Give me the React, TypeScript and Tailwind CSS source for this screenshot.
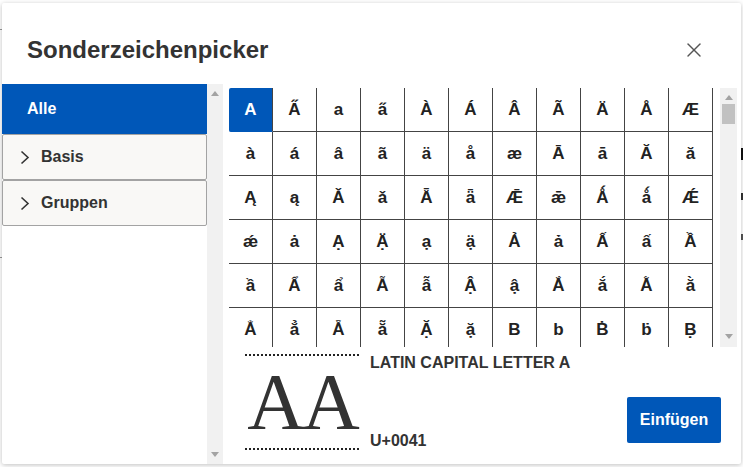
import React, { useState } from 'react';
import { X } from 'lucide-react';

const rows: string[][] = [
  ['A', 'A\u030B', 'a', 'a\u030B', 'À', 'Á', 'Â', 'Ã', 'Ä', 'Å', 'Æ'],
  ['à', 'á', 'â', 'ã', 'ä', 'å', 'æ', 'Ā', 'ā', 'Ă', 'ă'],
  ['Ą', 'ą', 'Ǎ', 'ǎ', 'Ǟ', 'ǟ', 'Ǣ', 'ǣ', 'Ǻ', 'ǻ', 'Ǽ'],
  ['ǽ', 'ȧ', 'Ạ', 'Ä\u0323', 'ạ', 'ä\u0323', 'Ả', 'ả', 'Ấ', 'ấ', 'Ầ'],
  ['ầ', 'Ẩ', 'ẩ', 'Ẫ', 'ẫ', 'Ậ', 'ậ', 'Ắ', 'ắ', 'Ằ', 'ằ'],
  ['Ẳ', 'ẳ', 'Ẵ', 'ẵ', 'Ặ', 'ặ', 'B', 'b', 'Ḃ', 'ḃ', 'Ḅ'],
];

const Arrow = ({ down = false }: { down?: boolean }) => (
  <svg width="8" height="5" viewBox="0 0 8 5" className="block">
    <polygon points={down ? '0,0 8,0 4,5' : '0,5 8,5 4,0'} fill="#a3a3a3" />
  </svg>
);

const Chevron = () => (
  <svg width="10" height="15" viewBox="0 0 10 15" className="block shrink-0">
    <polyline points="1.5,1.5 8,7.5 1.5,13.5" fill="none" stroke="#333" strokeWidth="1.6" />
  </svg>
);

export default function App() {
  const [selected] = useState('A');

  return (
    <div className="relative w-[743px] h-[467px] bg-white overflow-hidden font-['Liberation_Sans',Arial,sans-serif] text-[#333]">
      {/* page behind the dialog */}
      <div className="absolute left-0 top-[29px] w-[3px] h-px bg-[#999]" />
      <div className="absolute left-0 top-[257px] w-[3px] h-px bg-[#999]" />
      <div className="absolute right-0 top-[148px] w-[2px] h-[12px] bg-[#111]" />
      <div className="absolute right-0 top-[193px] w-[2px] h-[7px] bg-[#333]" />
      <div className="absolute right-0 top-[234px] w-[2px] h-[6px] bg-[#555]" />

      {/* dialog */}
      <div className="absolute left-[2px] top-[3px] w-[739px] h-[461px] bg-white rounded-[2px] shadow-[0_1px_5px_rgba(0,0,0,0.25)] flex flex-col">
        <div className="h-[81px] shrink-0 flex items-start justify-between pl-[25px] pr-[35px] pt-[33px]">
          <h2 className="text-[24px] leading-[28px] font-bold text-[#333]">Sonderzeichenpicker</h2>
          <button className="h-[28px] flex items-center text-[#555]" title="Schließen">
            <X size={24} strokeWidth={1.4} />
          </button>
        </div>

        <div className="flex flex-1 min-h-0">
          {/* sidebar */}
          <div className="w-[221px] shrink-0 flex">
            <div className="w-[205px] flex flex-col">
              <div className="h-[50px] bg-[#0057b8] text-white text-[16px] font-bold flex items-center pl-[25px]">
                Alle
              </div>
              <div className="h-[46px] bg-[#f9f8f6] border border-[#a3a3a3] rounded-[2px] flex items-center pl-[17px] gap-[11px] text-[16px] font-bold text-[#333]">
                <Chevron />
                Basis
              </div>
              <div className="h-[46px] bg-[#f9f8f6] border border-[#a3a3a3] rounded-[2px] flex items-center pl-[17px] gap-[11px] text-[16px] font-bold text-[#333]">
                <Chevron />
                Gruppen
              </div>
            </div>
            <div className="w-[16px] bg-[#f1f1f1] flex flex-col items-center justify-between py-[7px]">
              <Arrow />
              <Arrow down />
            </div>
          </div>

          {/* main */}
          <div className="flex-1 flex flex-col pl-[6px] pt-[4px]">
            <div className="flex h-[259px]">
              <div className="w-[484px] h-[259px] overflow-hidden">
                {rows.map((row, r) => (
                  <div key={r} className="flex">
                    {row.map((ch, c) => {
                      const isSel = ch === selected && r === 0 && c === 0;
                      return (
                        <div
                          key={c}
                          className={`w-[44px] h-[44px] shrink-0 flex items-center justify-center text-[17px] font-bold border-r border-b ${
                            isSel
                              ? 'bg-[#0057b8] text-white border-r-[#444] border-b-[#0057b8] rounded-tl-[2px] rounded-bl-[2px]'
                              : 'border-[#444] text-[#222]'
                          }`}
                        >
                          {ch}
                        </div>
                      );
                    })}
                  </div>
                ))}
              </div>
              <div className="ml-[7px] w-[17px] h-[259px] bg-[#f1f1f1] flex flex-col items-center pt-[7px] pb-[8px]">
                <Arrow />
                <div className="mt-[4px] w-[13px] h-[20px] bg-[#c1c1c1]" />
                <div className="flex-1" />
                <Arrow down />
              </div>
            </div>

            {/* preview */}
            <div className="flex pl-[16px] pt-[7px]">
              <div className="w-[114px] h-[96px] border-y-2 border-dotted border-[#222] flex items-center justify-center">
                <span className="font-['Liberation_Serif','Times_New_Roman',serif] text-[80px] leading-none tracking-[-3px] text-[#333] font-normal whitespace-nowrap">
                  AA
                </span>
              </div>
              <div className="ml-[11px] h-[96px] flex flex-col justify-between text-[16px] leading-[18px] font-bold text-[#333]">
                <span>LATIN CAPITAL LETTER A</span>
                <span>U+0041</span>
              </div>
              <button className="ml-auto mr-[20px] self-end mb-[7px] w-[94px] h-[46px] bg-[#0057b8] text-white text-[16px] font-bold rounded-[2px]">
                Einfügen
              </button>
            </div>
          </div>
        </div>
      </div>
    </div>
  );
}
